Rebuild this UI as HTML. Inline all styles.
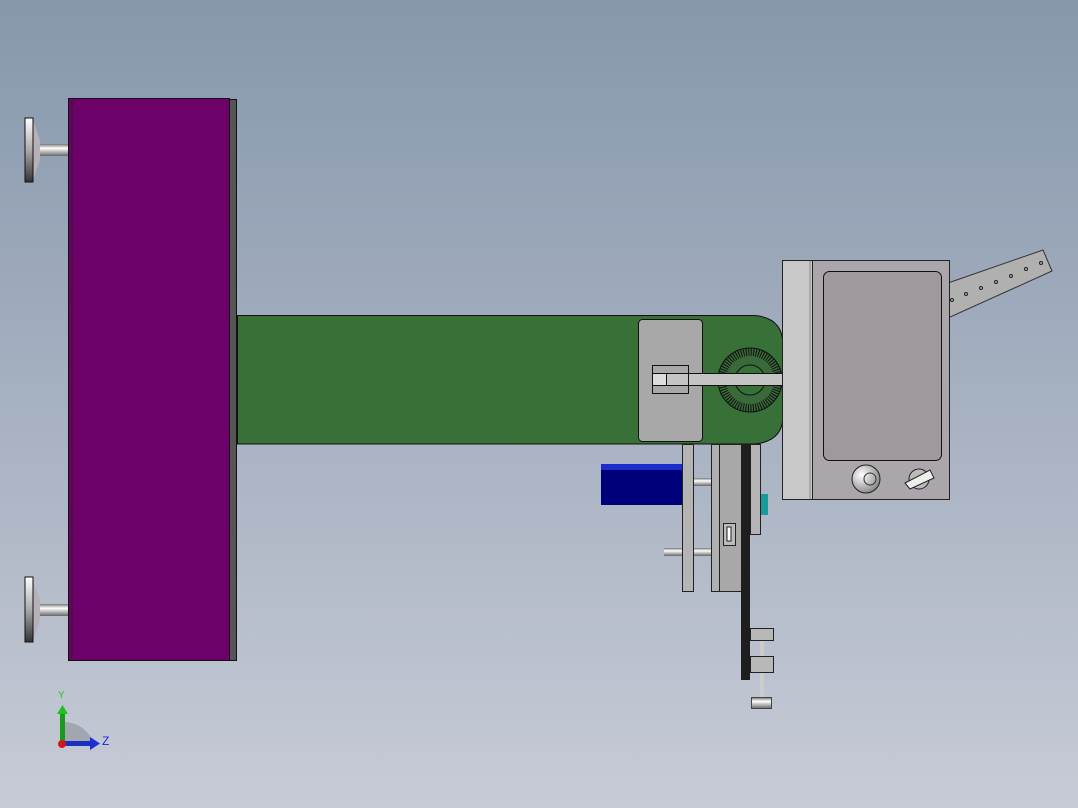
<!DOCTYPE html>
<html><head><meta charset="utf-8"><style>
html,body{margin:0;padding:0;width:1078px;height:808px;overflow:hidden}
body{background:linear-gradient(#8797ac 0%,#a3aebf 45%,#c7cbd6 100%)}
svg{position:absolute;left:0;top:0}
</style></head><body>
<svg width="1078" height="808" viewBox="0 0 1078 808">
<defs>
<linearGradient id="rod" x1="0" y1="0" x2="0" y2="1"><stop offset="0" stop-color="#777"/><stop offset=".35" stop-color="#fff"/><stop offset="1" stop-color="#666"/></linearGradient>
<linearGradient id="disc" x1="0" y1="0" x2="0" y2="1"><stop offset="0" stop-color="#fff"/><stop offset=".5" stop-color="#aaa"/><stop offset="1" stop-color="#333"/></linearGradient>
<radialGradient id="knob" cx=".35" cy=".35" r=".7"><stop offset="0" stop-color="#fff"/><stop offset="1" stop-color="#888"/></radialGradient>
</defs>
<!-- feet -->
<g stroke="#111" stroke-width="1">
<rect x="40" y="144" width="28" height="12" fill="url(#rod)" stroke="none"/>
<polygon points="33,120 40,140 40,160 33,180" fill="#b8b0b8" stroke="none"/>
<rect x="25" y="118" width="8" height="64" fill="url(#disc)"/>
<rect x="40" y="604" width="28" height="12" fill="url(#rod)" stroke="none"/>
<polygon points="33,579 40,600 40,620 33,640" fill="#b8b0b8" stroke="none"/>
<rect x="25" y="577" width="8" height="65" fill="url(#disc)"/>
</g>
<!-- purple box -->
<rect x="68.5" y="98.5" width="161" height="562" fill="#6e006a" stroke="#111"/>
<line x1="72" y1="100" x2="72" y2="659" stroke="#222" stroke-width="1"/>
<rect x="229.5" y="99.5" width="7" height="561" fill="#555" stroke="#111"/>
<!-- green arm -->
<path d="M237.5 315.5 H755 Q783 318 783 345 V416 Q783 441 755 444 H237.5 Z" fill="#377137" stroke="#111"/>
<rect x="638.5" y="319.5" width="64" height="122" rx="4" fill="#a8a8a8" stroke="#111"/>
<!-- torus -->
<circle cx="750" cy="380" r="32" fill="#3a6a3a" stroke="#111"/>
<g stroke="#111" stroke-width=".5">
<circle cx="750" cy="380" r="28" fill="none" stroke-dasharray="1 1.5" stroke-width="8"/>
</g>
<circle cx="750" cy="380" r="15" fill="#377137" stroke="#111"/>
<rect x="652.5" y="373.5" width="130" height="12" fill="#c4c4c4" stroke="#111"/>
<rect x="652.5" y="365.5" width="36" height="28" fill="none" stroke="#111"/>
<rect x="652.5" y="373.5" width="14" height="12" fill="#ddd" stroke="#111"/>
<!-- bracket strip -->
<polygon points="948,283 1043,250 1052,271 948,318" fill="#b0b0b0" stroke="#333"/>
<g fill="none" stroke="#222"><circle cx="952" cy="300" r="1.5"/><circle cx="966" cy="294" r="1.5"/><circle cx="981" cy="288" r="1.5"/><circle cx="996" cy="282" r="1.5"/><circle cx="1011" cy="276" r="1.5"/><circle cx="1026" cy="269" r="1.5"/><circle cx="1041" cy="263" r="1.5"/></g>
<!-- control box -->
<rect x="782.5" y="260.5" width="30" height="239" fill="#c8c8c8" stroke="#222"/>
<line x1="810" y1="261" x2="810" y2="499" stroke="#888"/>
<rect x="812.5" y="260.5" width="137" height="239" fill="#aaa6ab" stroke="#222"/>
<rect x="823.5" y="271.5" width="118" height="189" rx="6" fill="#9f999f" stroke="#111"/>
<circle cx="866" cy="479" r="14" fill="url(#knob)" stroke="#222"/>
<circle cx="870" cy="479" r="6" fill="none" stroke="#333"/>
<circle cx="919" cy="479" r="10" fill="#bbb" stroke="#222"/>
<polygon points="905,483 930,470 934,478 910,489" fill="#eee" stroke="#222"/>
<!-- lower mechanism -->
<rect x="601" y="464" width="81" height="41" fill="#00007a"/>
<rect x="601" y="464" width="81" height="6" fill="#1a2ccc"/>
<rect x="682.5" y="444.5" width="11" height="147" fill="#b4b4b4" stroke="#222"/>
<rect x="694" y="478" width="17" height="8" fill="url(#rod)"/>
<rect x="694" y="548" width="17" height="8" fill="url(#rod)"/>
<rect x="664" y="548" width="18" height="8" fill="url(#rod)"/>
<rect x="711.5" y="444.5" width="8" height="147" fill="#b0b0b0" stroke="#222"/>
<rect x="719.5" y="444.5" width="22" height="147" fill="#a8a8a8" stroke="#222"/>
<rect x="723.5" y="523.5" width="12" height="22" fill="#bbb" stroke="#222"/>
<rect x="727" y="527" width="4" height="14" fill="#fff" stroke="#222"/>
<rect x="741" y="444" width="9" height="236" fill="#1e1e1e"/>
<rect x="750.5" y="444.5" width="10" height="90" fill="#b4b4b4" stroke="#222"/>
<rect x="761" y="494" width="7" height="21" fill="#1a9a9a"/>
<rect x="760" y="640" width="4" height="62" fill="#ccc"/>
<rect x="750.5" y="628.5" width="23" height="12" fill="#b8b8b8" stroke="#222"/>
<rect x="750.5" y="656.5" width="23" height="16" fill="#b8b8b8" stroke="#222"/>
<rect x="751.5" y="697.5" width="20" height="11" fill="url(#rod)" stroke="#444"/>
<!-- axes -->
<path d="M62 722 A32 32 0 0 1 94 744 H62 Z" fill="#9a9ea6" opacity=".8"/>
<rect x="60" y="712" width="5" height="32" fill="#1a9a1a"/>
<polygon points="57,714 62.5,705 68,714" fill="#1fc01f"/>
<rect x="62" y="741" width="30" height="5" fill="#1a30c0"/>
<polygon points="90,737 100,743.5 90,750" fill="#1a30d0"/>
<circle cx="62" cy="744" r="4" fill="#d01a1a"/>
<text x="58" y="698" font-family="Liberation Sans, sans-serif" font-size="10" fill="#2c2">Y</text>
<text x="102" y="745" font-family="Liberation Sans, sans-serif" font-size="12" fill="#22d">Z</text>
</svg>
</body></html>
